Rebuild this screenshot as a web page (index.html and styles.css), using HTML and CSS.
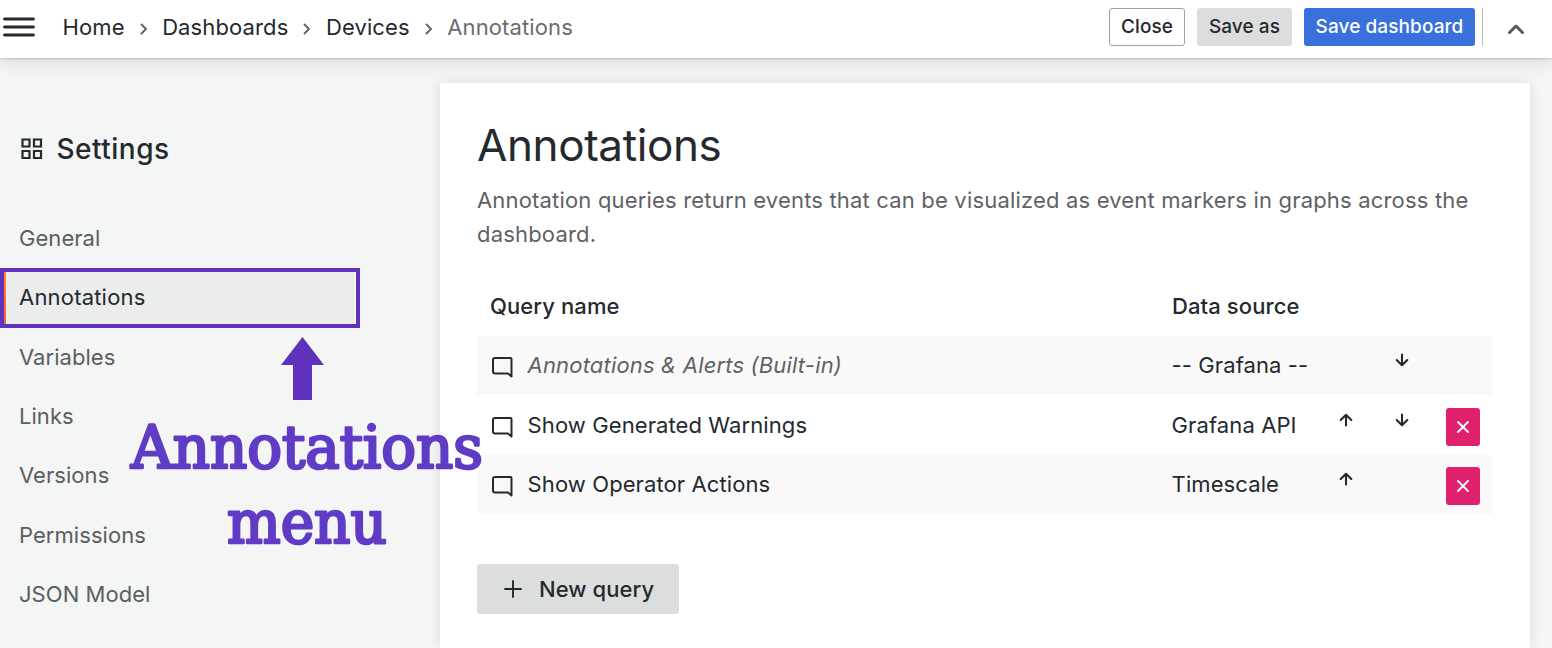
FILE: index.html
```
<!DOCTYPE html>
<html lang="en">
<head>
<meta charset="utf-8">
<title>Annotations - Settings</title>
<link rel="stylesheet" href="styles.css">
</head>
<body>
<svg width="0" height="0" class="defs">
  <symbol id="sep" viewBox="0 0 10 14"><path d="M2.500 2.500 7 7l-4.500 4.500"/></symbol>
  <symbol id="comment" viewBox="0 0 24 24"><path d="M5 3H20.500a1 1 0 0 1 1 1V21.500L18 18.500H5a2 2 0 0 1-2-2V5a2 2 0 0 1 2-2Z"/></symbol>
  <symbol id="down" viewBox="0 0 16 16"><path d="M8 2.500V13M2.700 8 8 13.200 13.300 8"/></symbol>
  <symbol id="up" viewBox="0 0 16 16"><path d="M8 13.500V3M2.700 8 8 2.800 13.300 8"/></symbol>
  <symbol id="times" viewBox="0 0 14 14"><path d="m2 2 10 10M12 2 2 12"/></symbol>
</svg>
<header class="topbar">
  <svg class="menu" viewBox="0 0 32 20"><path d="M1.500 2h29M1.500 10h29M1.500 18h29"/></svg>
  <nav class="crumbs">
    <span>Home</span><svg class="sep"><use href="#sep"/></svg>
    <span>Dashboards</span><svg class="sep"><use href="#sep"/></svg>
    <span>Devices</span><svg class="sep"><use href="#sep"/></svg>
    <span class="current">Annotations</span>
  </nav>
  <div class="actions">
    <button class="btn close">Close</button>
    <button class="btn save-as">Save as</button>
    <button class="btn save">Save dashboard</button>
    <span class="divider"></span>
    <svg class="chevron" viewBox="0 0 18 12"><path d="M2.500 9.500 9 3l6.500 6.500"/></svg>
  </div>
</header>
<div class="page">
  <aside class="sidebar">
    <h2 class="heading">
      <svg class="apps" viewBox="0 0 22 22"><path d="M1.500 1.500h7v7h-7zM13 1.500h7v7h-7zM1.500 13h7v7h-7zM13 13h7v7h-7z"/></svg>
      Settings
    </h2>
    <ul class="nav">
      <li>General</li>
      <li class="active">Annotations</li>
      <li>Variables</li>
      <li>Links</li>
      <li>Versions</li>
      <li>Permissions</li>
      <li>JSON Model</li>
    </ul>
  </aside>
  <main class="panel">
    <h1>Annotations</h1>
    <p>Annotation queries return events that can be visualized as event markers in graphs across the dashboard.</p>
    <div class="table">
      <div class="row head"><span>Query name</span><span>Data source</span></div>
      <div class="row odd first">
        <span class="name builtin"><svg class="comment"><use href="#comment"/></svg><em>Annotations &amp; Alerts (Built-in)</em></span>
        <span>-- Grafana --</span><span></span>
        <svg class="arrow"><use href="#down"/></svg>
      </div>
      <div class="row">
        <span class="name"><svg class="comment"><use href="#comment"/></svg>Show Generated Warnings</span>
        <span>Grafana API</span>
        <svg class="arrow"><use href="#up"/></svg>
        <svg class="arrow"><use href="#down"/></svg>
        <button class="delete"><svg><use href="#times"/></svg></button>
      </div>
      <div class="row odd">
        <span class="name"><svg class="comment"><use href="#comment"/></svg>Show Operator Actions</span>
        <span>Timescale</span>
        <svg class="arrow"><use href="#up"/></svg>
        <span></span>
        <button class="delete"><svg><use href="#times"/></svg></button>
      </div>
    </div>
    <button class="new-query"><svg viewBox="0 0 18 18"><path d="M9 1v16M1 9h16"/></svg>New query</button>
  </main>
</div>
<div class="callout-box"></div>
<svg class="callout" viewBox="120 330 370 230">
  <path d="M302.500 337 324 365H312V400H293V365H281Z"/>
  <text x="131" y="468" textLength="352" lengthAdjust="spacingAndGlyphs">Annotations</text>
  <text x="227" y="543" textLength="160" lengthAdjust="spacingAndGlyphs">menu</text>
</svg>
</body>
</html>
```
FILE: styles.css
```
* { box-sizing: border-box; }
body {
  margin: 0;
  height: 648px;
  overflow: hidden;
  display: flex;
  flex-direction: column;
  background: #f4f5f5;
  color: #24292e;
  font: 400 22px/34px Inter, sans-serif;
  letter-spacing: 0.18px;
}
button { font: inherit; letter-spacing: inherit; color: inherit; border: 0; padding: 0; }
svg { flex: none; fill: none; stroke: currentColor; stroke-linecap: round; stroke-linejoin: round; }
.defs { position: absolute; }

.topbar {
  position: relative;
  z-index: 1;
  flex: none;
  display: flex;
  align-items: center;
  height: 58px;
  padding: 0 27px 4px 3px;
  background: #fff;
  box-shadow: 0 1px 2px rgba(24, 26, 27, .2), 0 2px 20px rgba(24, 26, 27, .14);
}
.menu { width: 32px; height: 20px; stroke-width: 2.8; }
.crumbs { display: flex; align-items: center; margin-left: 27.5px; letter-spacing: 0.12px; }
.crumbs .current { color: #6a6d70; }
.sep { width: 10px; height: 14px; margin: 3px 13.500px 0 14px; color: #65686b; stroke-width: 2; }
.actions { display: flex; align-items: center; margin-left: auto; }
.btn {
  height: 38px;
  margin-right: 12px;
  border-radius: 3px;
  font-size: 19px;
  font-weight: 500;
  letter-spacing: 0.08px;
}
.close { width: 76px; border: 1px solid #a0a2a4; background: #fff; }
.save-as { width: 95px; background: #dcdedd; }
.save { width: 171px; margin-right: 7px; background: #3871dc; color: #fff; }
.divider { width: 1px; height: 38px; background: #b9babb; }
.chevron { width: 18px; height: 12px; margin: 3px 0 0 24px; stroke-width: 3; color: #56595c; }

.page { flex: 1; display: flex; align-items: stretch; }
.sidebar { width: 440px; padding-top: 74px; }
.heading {
  display: flex;
  align-items: center;
  gap: 14px;
  margin: 0 0 55px;
  padding-left: 20.500px;
  font-size: 28px;
  font-weight: 500;
  letter-spacing: 0.5px;
}
.apps { width: 22px; height: 22px; stroke-width: 2.2; stroke-linejoin: miter; }
.nav { list-style: none; width: 355px; margin: 0; padding: 0; color: #5b5e61; letter-spacing: 0.05px; }
.nav li { height: 51.350px; margin: 0 0 8px; padding: 0 0 0 19px; line-height: 34px; }
.nav .active { color: #24292e; letter-spacing: 0.2px; }

.panel {
  width: 1090px;
  margin-top: 25px;
  padding: 36px 38px 0 37px;
  background: #fff;
  box-shadow: 0 0 12px rgba(24, 26, 27, .1);
}
h1 { margin: 0 0 12px; font-size: 44px; font-weight: 400; line-height: 52px; letter-spacing: -0.4px; }
p { margin: 0; color: #5f6265; }
.table { margin-top: 25px; }
.row {
  display: grid;
  grid-template-columns: 682px 162px 56px 56px 34px;
  align-items: center;
  height: 59.400px;
  padding-left: 12.600px;
  letter-spacing: 0.1px;
}
.head { height: 60px; padding-left: 13px; font-weight: 500; }
.first { padding-bottom: 1px; }
.odd { background: #f9f9f9; }
.name { display: flex; align-items: center; gap: 14px; }
.builtin { color: #5f6265; letter-spacing: 0.17px; }
.comment { width: 24px; height: 24px; margin-top: 3px; stroke-width: 2; color: #24292e; }
.arrow { width: 16px; height: 16px; margin: -10px 0 0 4.500px; stroke-width: 2.1; }
.delete {
  display: grid;
  place-items: center;
  width: 34px;
  height: 38px;
  margin: 4px 0 0 .4px;
  border-radius: 3px;
  background: #e0226e;
  color: #fff;
}
.delete svg { width: 14px; height: 14px; stroke-width: 1.8; }
.new-query {
  display: flex;
  align-items: center;
  gap: 17px;
  width: 202px;
  height: 50px;
  margin-top: 50px;
  padding-left: 27px;
  border-radius: 3px;
  background: #dcdedd;
  font-weight: 500;
  letter-spacing: 0.08px;
}
.new-query svg { width: 18px; height: 18px; stroke-width: 1.9; }

/* Callout laid over the settings page */
.callout-box {
  position: absolute;
  left: 0;
  top: 268px;
  width: 360px;
  height: 60px;
  border: 4px solid #6032bb;
  background: linear-gradient(#ff8833, #f55f3e) 0 0 / 2px 100% no-repeat,
    linear-gradient(rgba(36, 41, 46, .045), rgba(36, 41, 46, .045)) 2px 0 / 348px 100% no-repeat;
}
.callout { position: absolute; left: 120px; top: 330px; width: 370px; height: 230px; fill: #6032bb; stroke: none; }
.callout text {
  fill: #603cc6;
  stroke: #603cc6;
  stroke-width: 2.6;
  font: 400 60px "DejaVu Serif Condensed", "DejaVu Serif", serif;
  letter-spacing: 0;
}
```
